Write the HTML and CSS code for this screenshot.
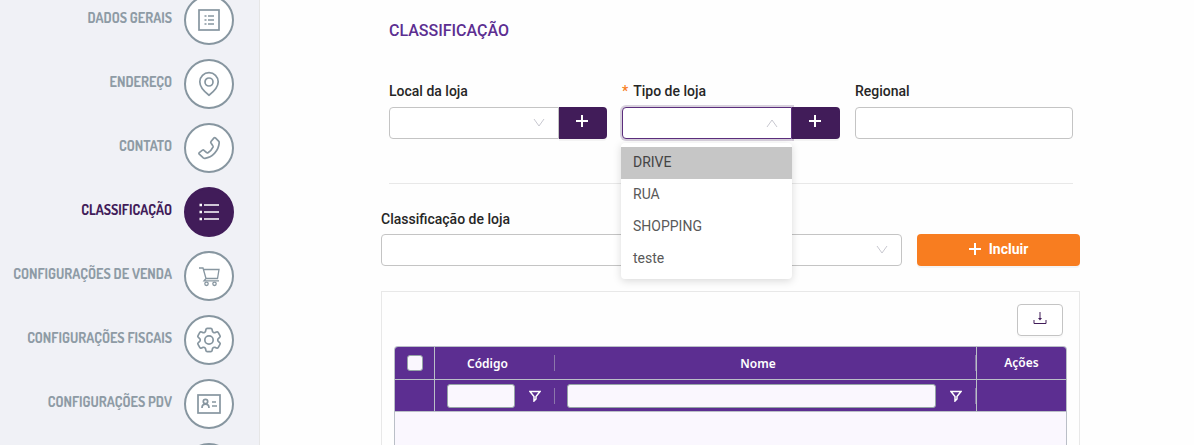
FILE: index.html
```
<!DOCTYPE html>
<html lang="pt-br">
<head>
	<meta charset="utf-8">
	<title>Cadastro de loja</title>
	<link rel="stylesheet" href="styles.css">
</head>
<body>

	<nav class="sidebar">
		<a href="#dados" class="step">
			<span class="step-label">DADOS GERAIS</span>
			<span class="step-icon">
				<svg viewBox="0 0 26 26"><rect x="3" y="3" width="20" height="20"/><path d="M8.500 9h2M8.500 13h2M8.500 17h2M12 9h6M12 13h6M12 17h6"/></svg>
			</span>
		</a>
		<a href="#endereco" class="step">
			<span class="step-label">ENDEREÇO</span>
			<span class="step-icon">
				<svg viewBox="0 0 26 26"><path d="M13 24.300C8 20.500 3.800 15 3.800 10.800a9.200 9.200 0 0 1 18.400 0C22.200 15 18 20.500 13 24.300z"/><circle cx="13" cy="11" r="4"/></svg>
			</span>
		</a>
		<a href="#contato" class="step">
			<span class="step-label">CONTATO</span>
			<span class="step-icon">
				<svg viewBox="0 0 26 26"><path d="M15 6.500l3-3.600q.7-.6 1.400 0l3.200 3.200q.7.700.6 1.700C22.500 15.500 16.500 22.500 9 23.300q-1 .1-1.700-.5l-4-3.600q-.8-.8 0-1.500l3.200-2.500q.8-.5 1.500.1l2.600 2.400q.6.500 1.400 0c2-1.300 4-3.500 5-5.600q.3-.8-.2-1.400L15 8q-.6-.8 0-1.500z"/></svg>
			</span>
		</a>
		<a href="#classificacao" class="step active">
			<span class="step-label">CLASSIFICAÇÃO</span>
			<span class="step-icon">
				<svg viewBox="0 0 26 26"><path d="M8 6h15M8 13h15M8 20h15"/><path class="dots" d="M3.500 6h2.500M3.500 13h2.500M3.500 20h2.500"/></svg>
			</span>
		</a>
		<a href="#venda" class="step">
			<span class="step-label">CONFIGURAÇÕES DE VENDA</span>
			<span class="step-icon">
				<svg class="thin" viewBox="0 0 26 26"><path d="M3 5h4l3 10.500h11.500l1.500-9H7.500M10 15.500l-2 2.300h15"/><circle cx="10.500" cy="20.800" r="1.700"/><circle cx="18.500" cy="20.800" r="1.700"/></svg>
			</span>
		</a>
		<a href="#fiscais" class="step">
			<span class="step-label">CONFIGURAÇÕES FISCAIS</span>
			<span class="step-icon">
				<svg class="gear" viewBox="2 2 20 20"><path d="M9.594 3.940c.09-.542.56-.94 1.110-.94h2.593c.55 0 1.020.398 1.110.940l.213 1.281c.063.374.313.686.645.870.074.040.147.083.220.127.325.196.720.257 1.075.124l1.217-.456a1.125 1.125 0 0 1 1.370.490l1.296 2.247a1.125 1.125 0 0 1-.260 1.431l-1.003.827c-.293.241-.438.613-.430.992a7.723 7.723 0 0 1 0 .255c-.008.378.137.750.430.991l1.004.827c.424.350.534.955.260 1.430l-1.298 2.247a1.125 1.125 0 0 1-1.369.491l-1.217-.456c-.355-.133-.750-.072-1.076.124a6.470 6.470 0 0 1-.220.128c-.331.183-.581.495-.644.869l-.213 1.281c-.090.543-.560.940-1.110.940h-2.594c-.550 0-1.019-.398-1.110-.940l-.213-1.281c-.062-.374-.312-.686-.644-.870a6.520 6.520 0 0 1-.220-.127c-.325-.196-.720-.257-1.076-.124l-1.217.456a1.125 1.125 0 0 1-1.369-.490l-1.297-2.247a1.125 1.125 0 0 1 .260-1.431l1.004-.827c.292-.240.437-.613.430-.991a6.932 6.932 0 0 1 0-.255c.007-.380-.138-.751-.430-.992l-1.004-.827a1.125 1.125 0 0 1-.260-1.430l1.297-2.247a1.125 1.125 0 0 1 1.370-.491l1.216.456c.356.133.751.072 1.076-.124.072-.044.146-.086.220-.128.332-.183.582-.495.644-.869l.214-1.280Z"/><circle cx="12" cy="12" r="3.200"/></svg>
			</span>
		</a>
		<a href="#pdv" class="step">
			<span class="step-label">CONFIGURAÇÕES PDV</span>
			<span class="step-icon">
				<svg viewBox="0 0 26 26"><rect x="2" y="4" width="22" height="18"/><circle cx="9.500" cy="10.500" r="2.200"/><path d="M6 17q0-3.800 3.500-3.800T13 17M16 11h4M16 15h5"/></svg>
			</span>
		</a>
		<a href="#outros" class="step" aria-label="Próxima etapa">
			<span class="step-icon"></span>
		</a>
	</nav>

	<main class="content">
		<section class="dados">
			<h1>CLASSIFICAÇÃO</h1>

			<div class="campos">
				<div class="campo">
					<label for="local">Local da loja</label>
					<div class="grupo">
						<div class="select">
							<select id="local"><option></option></select>
							<svg class="seta" viewBox="0 0 12 12"><path d="M1 2l5 7 5-7"/></svg>
						</div>
						<button class="add" type="button" aria-label="Adicionar local"><svg class="plus" viewBox="0 0 12 12"><path d="M6 0v12M0 6h12"/></svg></button>
					</div>
				</div>

				<div class="campo">
					<label for="tipo"><span class="required">*</span>Tipo de loja</label>
					<div class="grupo">
						<div class="select aberto">
							<select id="tipo">
								<option></option>
								<option>DRIVE</option>
								<option>RUA</option>
								<option>SHOPPING</option>
								<option>teste</option>
							</select>
							<svg class="seta" viewBox="0 0 12 12"><path d="M1 10l5-7 5 7"/></svg>
							<ul class="menu" role="listbox" aria-label="Tipo de loja">
								<li role="option" aria-selected="true" class="marcado">DRIVE</li>
								<li role="option">RUA</li>
								<li role="option">SHOPPING</li>
								<li role="option">teste</li>
							</ul>
						</div>
						<button class="add" type="button" aria-label="Adicionar tipo"><svg class="plus" viewBox="0 0 12 12"><path d="M6 0v12M0 6h12"/></svg></button>
					</div>
				</div>

				<div class="campo">
					<label for="regional">Regional</label>
					<input id="regional" class="texto" type="text">
				</div>
			</div>
		</section>

		<div class="incluir-linha">
			<div class="campo">
				<label for="classe">Classificação de loja</label>
				<div class="select">
					<select id="classe"><option></option></select>
					<svg class="seta" viewBox="0 0 12 12"><path d="M1 2l5 7 5-7"/></svg>
				</div>
			</div>
			<button class="incluir" type="button"><svg class="plus" viewBox="0 0 12 12"><path d="M6 0v12M0 6h12"/></svg>Incluir</button>
		</div>

		<section class="painel">
			<div class="acoes">
				<button class="download" type="button" aria-label="Exportar">
					<svg viewBox="0 0 14 14"><path d="M7 1v7M1 9v3.500h12V9"/><path class="ponta" d="M5 7h4L7 9.500z"/></svg>
				</button>
			</div>

			<div class="grid">
				<table>
					<colgroup>
						<col class="col-check">
						<col class="col-codigo">
						<col>
						<col class="col-acoes">
					</colgroup>
					<thead>
						<tr>
							<th class="linha"><input type="checkbox" aria-label="Selecionar todos"></th>
							<th><div class="celula">Código</div></th>
							<th class="linha"><div class="celula">Nome</div></th>
							<th>Ações</th>
						</tr>
						<tr>
							<td class="linha"></td>
							<td>
								<div class="celula filtro">
									<input type="text" aria-label="Filtrar código">
									<button type="button" aria-label="Filtro de código"><svg viewBox="0 0 12 12"><path d="M1 1.500h10L7 6.500V9l-2 2V6.500z"/></svg></button>
								</div>
							</td>
							<td class="linha">
								<div class="celula filtro">
									<input type="text" aria-label="Filtrar nome">
									<button type="button" aria-label="Filtro de nome"><svg viewBox="0 0 12 12"><path d="M1 1.500h10L7 6.500V9l-2 2V6.500z"/></svg></button>
								</div>
							</td>
							<td></td>
						</tr>
					</thead>
				</table>
			</div>
		</section>
	</main>

</body>
</html>
```

FILE: styles.css
```
*{
	box-sizing: border-box;
}

body{
	margin: 0;
	height: 100vh;
	overflow: hidden;
	display: flex;
	background: #fefefe;
	color: #262626;
	font: 14px/20px Roboto, sans-serif;
}

button, input, select{
	font: inherit;
	margin: 0;
}

button{
	cursor: pointer;
}

svg{
	fill: none;
	stroke: currentColor;
	flex: none;
}

/* menu lateral */
.sidebar{
	width: 260px;
	flex: none;
	height: 100vh;
	overflow: hidden;
	padding-right: 25px;
	background: #f0f1f6;
	border-right: 1px solid #e6e6e6;
}

.step{
	display: flex;
	align-items: center;
	justify-content: flex-end;
	gap: 12px;
	margin-bottom: 14px;
	color: #8e9ba5;
	text-decoration: none;
}

.step:first-child{
	margin-top: -5px;
}

.step-label{
	font: bold 14px/20px Dosis, Roboto, sans-serif;
	padding-bottom: 4px;
	white-space: nowrap;
}

.step-icon{
	width: 50px;
	height: 50px;
	flex: none;
	display: flex;
	align-items: center;
	justify-content: center;
	border: 2px solid #8796a0;
	border-radius: 50%;
	background: #fff;
	color: #8796a0;
}

.step-icon svg{
	width: 26px;
	height: 26px;
	stroke-width: 1.7;
}

.step-icon .thin{
	stroke-width: 1.3;
}

.step-icon .gear{
	stroke-width: 1.3;
}

.step.active{
	color: #411c59;
}

.active .step-icon{
	background: #411c59;
	border-color: #411c59;
	color: #fff;
}

.dots{
	stroke-width: 2.4;
}

/* conteudo */
.content{
	flex: 1;
	min-width: 0;
	height: 100vh;
	display: flex;
	flex-direction: column;
	padding: 21px 114px 0 121px;
}

.dados{
	margin: 0 7px 0 8px;
	padding-bottom: 44px;
	border-bottom: 1px solid #e8e8e8;
}

h1{
	margin: 0 0 40px;
	font-size: 16px;
	line-height: 20px;
	font-weight: 500;
	color: #5c2e91;
}

.campos{
	display: grid;
	grid-template-columns: repeat(3, 1fr);
	gap: 15px;
}

label{
	display: block;
	margin-bottom: 6px;
	font-weight: 500;
}

.required{
	margin-right: 5px;
	color: #f87d20;
}

.grupo{
	display: flex;
}

.select{
	position: relative;
	flex: 1;
	min-width: 0;
}

select, .texto{
	display: block;
	width: 100%;
	height: 32px;
	padding: 0 11px;
	border: 1px solid #c4c4c4;
	border-radius: 4px;
	background: #fff;
	appearance: none;
	outline: none;
}

.grupo select{
	border-radius: 4px 0 0 4px;
}

.aberto select{
	border-color: #5c2e7d;
	box-shadow: 0 0 0 2px rgba(65,28,89,.2);
}

.seta{
	position: absolute;
	top: 10px;
	right: 14px;
	width: 12px;
	height: 12px;
	color: #c8c8d0;
	pointer-events: none;
}

.plus{
	width: 12px;
	height: 12px;
	stroke-width: 2;
}

.add{
	width: 48px;
	height: 32px;
	padding: 0 2px 4px 0;
	display: flex;
	align-items: center;
	justify-content: center;
	position: relative;
	border: 0;
	border-radius: 0 4px 4px 0;
	background: #411c59;
	color: #fff;
	box-shadow: 0 2px 0 rgba(0,0,0,.04);
}

.menu{
	position: absolute;
	z-index: 5;
	top: 36px;
	left: -1px;
	right: 0;
	margin: 0;
	padding: 4px 0;
	list-style: none;
	background: #fff;
	border-radius: 4px;
	box-shadow: 0 2px 8px rgba(0,0,0,.15);
	color: #595959;
}

.menu li{
	padding: 5px 12px 7px;
	line-height: 20px;
}

.menu .marcado{
	background: #c6c6c6;
	color: #444;
}

.incluir-linha{
	display: flex;
	align-items: flex-end;
	gap: 15px;
	margin: 25px 0;
}

.incluir-linha .campo{
	flex: 1;
}

.incluir-linha label{
	margin-bottom: 5px;
}

.incluir{
	width: 163px;
	height: 32px;
	padding: 0 0 2px;
	display: flex;
	align-items: center;
	justify-content: center;
	gap: 8px;
	border: 0;
	border-radius: 4px;
	background: #f87d20;
	color: #fff;
	font-weight: 700;
	box-shadow: 0 2px 0 rgba(0,0,0,.04);
}

/* tabela */
.painel{
	flex: 1;
	display: flex;
	flex-direction: column;
	padding: 12px 12px 0;
	border: 1px solid #e8e8e8;
	border-bottom: 0;
}

.acoes{
	display: flex;
	justify-content: flex-end;
	margin-bottom: 10px;
	padding-right: 4px;
}

.download{
	width: 46px;
	height: 32px;
	padding: 0 0 4px;
	display: flex;
	align-items: center;
	justify-content: center;
	border: 1px solid #c4c4c4;
	border-radius: 4px;
	background: #fff;
	color: #411c59;
	box-shadow: 0 2px 0 rgba(0,0,0,.02);
}

.download svg{
	width: 14px;
	height: 14px;
}

.ponta{
	fill: currentColor;
	stroke: none;
}

.grid{
	flex: 1;
	overflow: hidden;
	border: 1px solid #babfc7;
	border-bottom: 0;
	border-radius: 4px 4px 0 0;
	background: #faf7fe;
}

table{
	width: 100%;
	table-layout: fixed;
	border-collapse: separate;
	border-spacing: 0;
	background: #5c2e91;
	color: #fff;
	font: 12px/18px "Noto Sans", sans-serif;
}

.col-check{
	width: 40px;
}

.col-codigo{
	width: 120px;
}

.col-acoes{
	width: 89px;
}

th, td{
	height: 32px;
	padding: 0;
	border-bottom: 1px solid #babfc7;
	text-align: center;
	vertical-align: middle;
}

th{
	height: 33px;
	font-weight: 600;
}

.linha{
	border-right: 1px solid #babfc7;
}

/* barrinha de redimensionar a coluna */
.celula{
	height: 16px;
	padding: 0 11px 0 12px;
	border-right: 1px solid #8c77ab;
}

th .celula{
	padding: 0 14px 0 0;
}

.filtro{
	display: flex;
	align-items: center;
}

.filtro input{
	flex: 1;
	min-width: 0;
	height: 24px;
	padding: 0 6px;
	border: 1px solid #95a5a6;
	border-radius: 3px;
	background: #faf7fe;
}

.filtro button{
	width: 16px;
	margin-left: 12px;
	padding: 0 2px;
	height: 16px;
	display: flex;
	align-items: center;
	border: 0;
	background: none;
	color: #fff;
}

.filtro svg{
	width: 12px;
	height: 12px;
	stroke-width: 1.5;
}

input[type=checkbox]{
	display: block;
	width: 16px;
	height: 16px;
	margin: 0 auto;
	appearance: none;
	border: 1px solid #95a5a6;
	border-radius: 3px;
	background: #faf7fe;
}
```
